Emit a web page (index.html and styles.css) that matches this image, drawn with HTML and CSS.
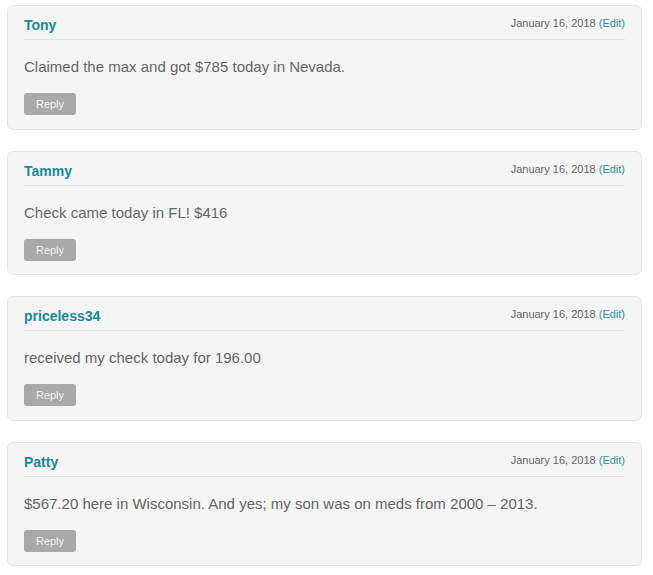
FILE: index.html
```html
<!DOCTYPE html>
<html>
<head>
<meta charset="utf-8">
<link rel="stylesheet" href="styles.css">
</head>
<body>
<div class="comments">
  <div class="card">
    <div class="head"><span class="name">Tony</span><span class="date">January 16, 2018 <a class="edit">(Edit)</a></span></div>
    <p class="text">Claimed the max and got $785 today in Nevada.</p>
    <span class="reply">Reply</span>
  </div>
  <div class="card">
    <div class="head"><span class="name">Tammy</span><span class="date">January 16, 2018 <a class="edit">(Edit)</a></span></div>
    <p class="text">Check came today in FL! $416</p>
    <span class="reply">Reply</span>
  </div>
  <div class="card">
    <div class="head"><span class="name">priceless34</span><span class="date">January 16, 2018 <a class="edit">(Edit)</a></span></div>
    <p class="text">received my check today for 196.00</p>
    <span class="reply">Reply</span>
  </div>
  <div class="card">
    <div class="head"><span class="name">Patty</span><span class="date">January 16, 2018 <a class="edit">(Edit)</a></span></div>
    <p class="text">$567.20 here in Wisconsin. And yes; my son was on meds from 2000 – 2013.</p>
    <span class="reply">Reply</span>
  </div>
</div>
</body>
</html>
```
FILE: styles.css
```css
html, body { background: #fff; }
body {
  margin: 5px 11px 0 7px;
  font-family: "Liberation Sans", Arial, sans-serif;
  color: #666;
}
.comments { display: flex; flex-direction: column; gap: 21px; }
.card {
  background: #f5f5f5;
  border: 1px solid #e4e4e4;
  border-radius: 6px;
  padding: 9px 16px 13.5px;
  display: flex;
  flex-direction: column;
  align-items: flex-start;
}
.head {
  align-self: stretch;
  display: flex;
  justify-content: space-between;
  align-items: flex-start;
  padding-bottom: 4px;
  border-bottom: 1px solid #e3e3e3;
}
.name {
  font-size: 14px;
  font-weight: bold;
  line-height: 20px;
  color: #178a9b;
}
.date {
  font-size: 11px;
  line-height: 16px;
  color: #666;
}
.edit { color: #2a93a6; }
.text {
  margin: 16px 0 15px;
  font-size: 15px;
  line-height: 22px;
  color: #666;
}
.reply {
  display: block;
  width: 52px;
  height: 22px;
  line-height: 22px;
  text-align: center;
  font-size: 11px;
  color: #f4f4f4;
  background: #a8a9ab;
  border-radius: 3px;
}
```
